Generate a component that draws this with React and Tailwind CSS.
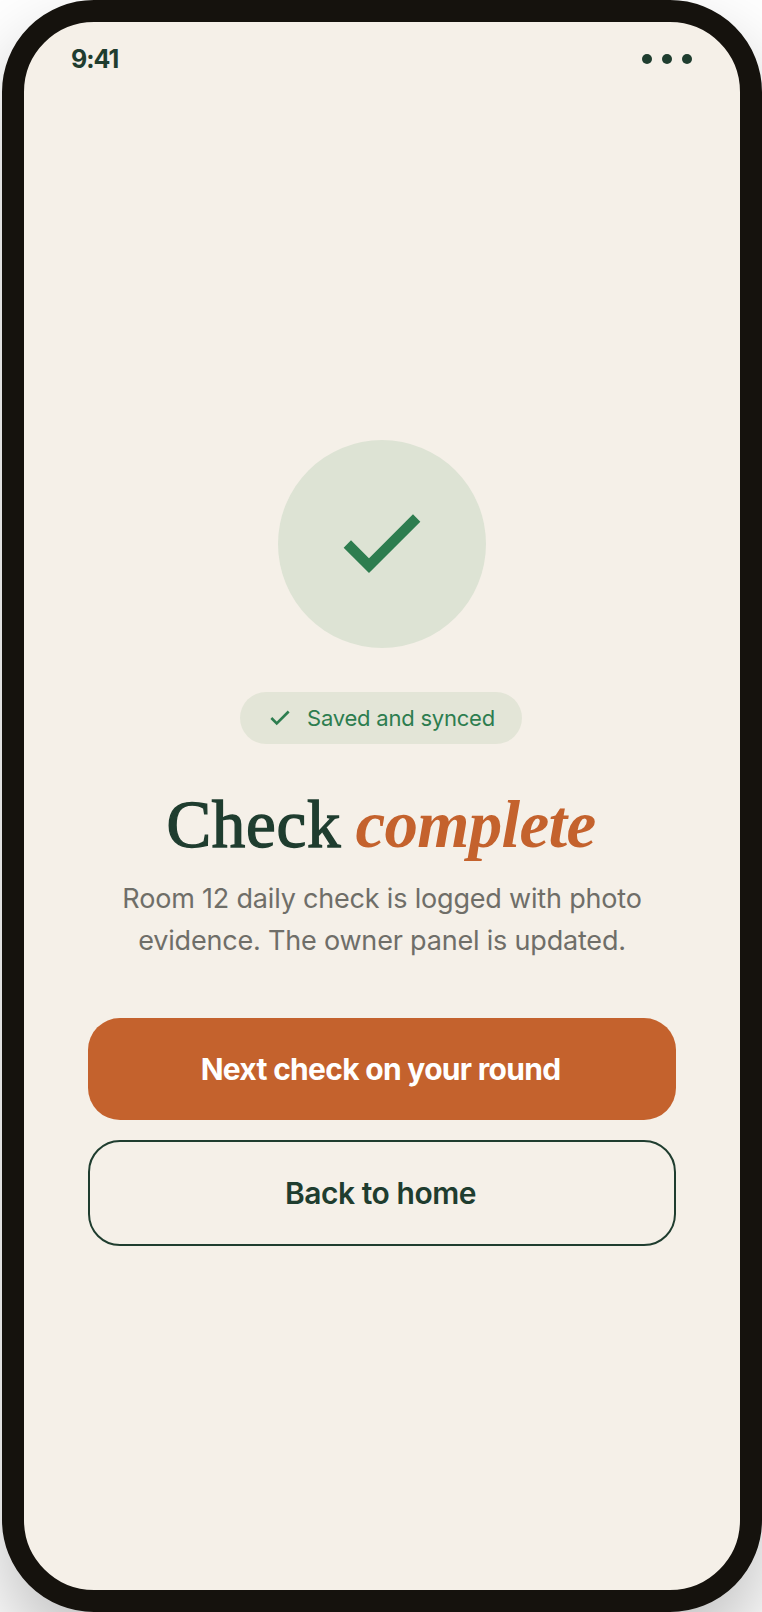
import React from "react";

const sans = "font-['Inter',sans-serif]";

const CheckMark = ({ className, strokeWidth }) => (
  <svg viewBox="0 0 24 24" fill="none" className={className}>
    <path d="M20 6 9 17l-5-5" stroke="#2d7d4f" strokeWidth={strokeWidth} />
  </svg>
);

export default function App() {
  return (
    <div className="h-[1612px] w-[762px] overflow-hidden bg-white pl-[2px]">
      <div className="h-[1612px] w-[760px] rounded-[92px] border-[22px] border-[#15120d] bg-[#f5f0e8] shadow-[0_40px_80px_rgba(0,0,0,0.25)]">
        <div className={`flex h-full flex-col ${sans}`}>
          {/* status bar */}
          <div className="flex h-[74px] items-start justify-between pl-[47px] pr-[48px] pt-[21px]">
            <span className="text-[25px] leading-[32px] font-bold tracking-[-0.04em] text-[#1f3d2f]">
              9:41
            </span>
            <div className="flex items-center gap-[10px] pt-[11px]">
              <span className="h-[10px] w-[10px] rounded-full bg-[#1f3d2f]" />
              <span className="h-[10px] w-[10px] rounded-full bg-[#1f3d2f]" />
              <span className="h-[10px] w-[10px] rounded-full bg-[#1f3d2f]" />
            </div>
          </div>

          {/* content */}
          <div className="flex flex-1 flex-col items-center justify-center px-[64px]">
            <div className="flex h-[208px] w-[208px] items-center justify-center rounded-full bg-[#dde3d4]">
              <CheckMark className="h-[104px] w-[104px]" strokeWidth={2.4} />
            </div>

            <div className="mt-[44px] mr-[2px] flex h-[52px] w-[282px] items-center justify-center gap-[14px] rounded-full bg-[#e3e5d7]">
              <CheckMark className="h-[26px] w-[26px]" strokeWidth={2.4} />
              <span className="text-[22px] tracking-[-0.01em] text-[#2d7d4f]">Saved and synced</span>
            </div>

            <h1 className="mt-[38px] mr-[2px] text-center font-['Liberation_Serif',serif] text-[67px] leading-[84px] tracking-[-0.01em] font-normal text-[#1f3d2f]">
              <span className="tracking-[0.011em] [-webkit-text-stroke:1.4px_#1f3d2f]">Check</span>{" "}
              <em className="ml-[-2px] font-bold text-[#c4622d]">complete</em>
            </h1>

            <p className="mt-[12px] w-[560px] text-center text-[27px] leading-[42px] tracking-[-0.007em] text-[#6f6e68]">
              Room 12 daily check is logged with photo evidence. The owner panel is updated.
            </p>

            <button className="mt-[56px] h-[102px] w-[588px] rounded-[32px] bg-[#c4622d] pr-[3px] text-[30px] font-bold tracking-[-0.0235em] text-white">
              Next check on your round
            </button>
            <button className="mt-[20px] h-[106px] w-[588px] rounded-[32px] border-2 border-[#1f3d2f] pr-[3px] text-[30px] font-semibold tracking-[-0.015em] text-[#1f3d2f]">
              Back to home
            </button>
          </div>
        </div>
      </div>
    </div>
  );
}
